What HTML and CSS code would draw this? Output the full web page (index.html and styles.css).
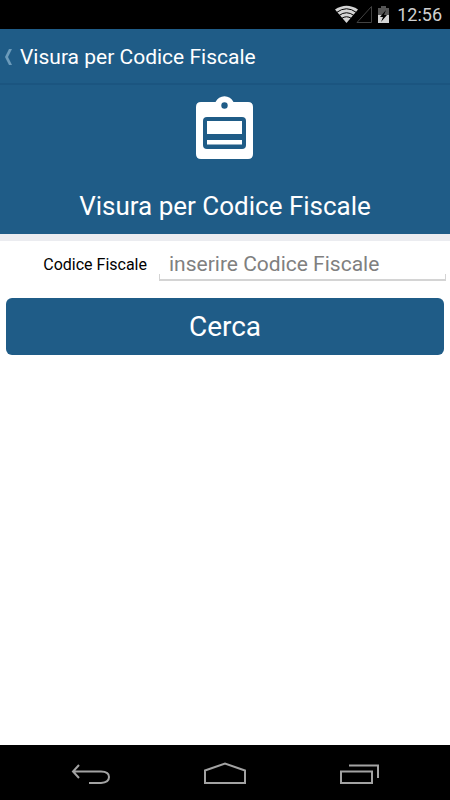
FILE: index.html
```html
<!DOCTYPE html>
<html lang="it">
<head>
<meta charset="utf-8">
<meta name="viewport" content="width=device-width, initial-scale=1">
<title>Visura per Codice Fiscale</title>
<link rel="stylesheet" href="styles.css">
</head>
<body>
<div class="status-bar">
  <svg class="status-icons" width="58" height="20" viewBox="0 0 58 20" aria-hidden="true">
    <path d="M0 4.500Q11.500-3 23 4.500L11.500 18Z" fill="#d4d4d4"/>
    <path d="M1.500 7.500Q11.500 0 21.500 7.500M4 10.500Q11.500 5 19 10.500M6.500 13.500Q11.500 10 16.500 13.500" fill="none" stroke="#000" stroke-width="1"/>
    <path d="M22 17.500H36.500V1.500Z" fill="none" stroke="#424242"/>
    <path d="M46 1h5v2h3v7H43V3h3Z" fill="#555"/>
    <path d="M43 10h11v8H43Z" fill="#d4d4d4"/>
    <path d="M51 5l-6 7h3l-2 5 6-7h-3Z" fill="#000"/>
  </svg>
  <time class="clock">12:56</time>
</div>
<header class="app-bar">
  <a class="up" href="#">
    <svg class="chevron" width="8" height="18" viewBox="0 0 8 18" aria-hidden="true"><path d="M5 1H8L4 9L8 17H5L1 9Z" fill="#6c9bbb"/></svg>
    <span>Visura per Codice Fiscale</span>
  </a>
</header>
<main class="content">
  <section class="hero">
    <svg width="58" height="64" viewBox="0 0 58 64" aria-hidden="true">
      <path d="M5 6H19.500C21.500 2.500 24.500 0.300 28.500 0.300S35.500 2.500 37.500 6H52Q57 6 57 11V58Q57 63 52 63H5Q0 63 0 58V11Q0 6 5 6Z" fill="#fff"/>
      <circle cx="28.500" cy="9.500" r="3.200" fill="#1f5c87"/>
      <rect x="7" y="21" width="43" height="32" rx="4" fill="#1f5c87"/>
      <path d="M11 25H46V38H11ZM11 44H46V48.500H11Z" fill="#fff"/>
    </svg>
    <h1>Visura per Codice Fiscale</h1>
  </section>
  <form class="search">
    <div class="field">
      <label for="cf">Codice Fiscale</label>
      <div class="input-wrap"><input id="cf" type="text" placeholder="inserire Codice Fiscale"></div>
    </div>
    <button class="submit" type="button">Cerca</button>
  </form>
</main>
<nav class="nav-bar">
  <button type="button" aria-label="Indietro">
    <svg width="40" height="24" viewBox="0 0 40 24"><path d="M8 3L2 9.500L8 16M2 9.500H30Q38 9.500 38 15T30 21H18" fill="none" stroke="#a3a3a3" stroke-width="2"/></svg>
  </button>
  <button type="button" aria-label="Home">
    <svg width="42" height="24" viewBox="0 0 42 24"><path d="M1 8.500L21 1.500L41 8.500V21H1Z" fill="none" stroke="#a3a3a3" stroke-width="2"/></svg>
  </button>
  <button type="button" aria-label="Recenti">
    <svg width="40" height="24" viewBox="0 0 40 24"><path d="M2 9.500H33V21H2ZM10 3.500H39V16" fill="none" stroke="#a3a3a3" stroke-width="2"/></svg>
  </button>
</nav>
</body>
</html>
```
FILE: styles.css
```css
* { box-sizing: border-box; }

body {
  display: flex;
  flex-direction: column;
  min-height: 100vh;
  margin: 0;
  background: #fff;
  color: #000;
  font-family: Roboto, sans-serif;
}

button, input { font-family: inherit; }

svg { display: block; }

.status-bar {
  display: flex;
  align-items: center;
  justify-content: flex-end;
  gap: 4px;
  height: 29px;
  padding: 0 8px;
  background: #000;
}

.clock {
  color: #d0d0d0;
  font-size: 18px;
  line-height: 28px;
}

.app-bar {
  height: 56px;
  background: #1f5c87;
  border-bottom: 2px solid #1b5580;
}

.up {
  display: flex;
  align-items: center;
  gap: 8px;
  height: 100%;
  padding: 2px 4px 0;
  color: #fff;
  font-size: 21px;
  text-decoration: none;
}

.content { flex: 1; }

.hero {
  display: flex;
  flex-direction: column;
  align-items: center;
  gap: 30px;
  padding: 11px 16px 12px;
  background: #1f5c87;
  color: #fff;
}

h1 {
  margin: 0;
  font-size: 26px;
  font-weight: 400;
  line-height: 32px;
}

.search {
  padding: 6px;
  border-top: 7px solid #ebecf0;
}

.field {
  display: flex;
  align-items: center;
  gap: 12px;
  margin-bottom: 17px;
}

label {
  width: 141px;
  font-size: 16px;
  text-align: right;
}

.input-wrap {
  position: relative;
  flex: 1;
  margin-right: -2px;
}

.input-wrap::after {
  content: "";
  position: absolute;
  inset: auto 0 0;
  height: 5px;
  border: 1px solid #d4d4d4;
  border-top: 0;
  border-bottom-width: 2px;
  pointer-events: none;
}

input {
  display: block;
  width: 100%;
  height: 34px;
  padding: 0 10px;
  border: 0;
  outline: 0;
  background: transparent;
  font-size: 21px;
}

input::placeholder { color: #808080; opacity: 1; }

.submit {
  display: block;
  width: 100%;
  padding: 12px;
  border: 0;
  border-radius: 6px;
  background: #1f5c87;
  color: #fff;
  font-size: 28px;
  line-height: 33px;
}

.nav-bar {
  display: flex;
  justify-content: center;
  gap: 22px;
  height: 55px;
  padding-top: 3px;
  background: #000;
}

.nav-bar button {
  display: grid;
  place-items: center;
  width: 112px;
  padding: 0;
  border: 0;
  background: none;
}
```
